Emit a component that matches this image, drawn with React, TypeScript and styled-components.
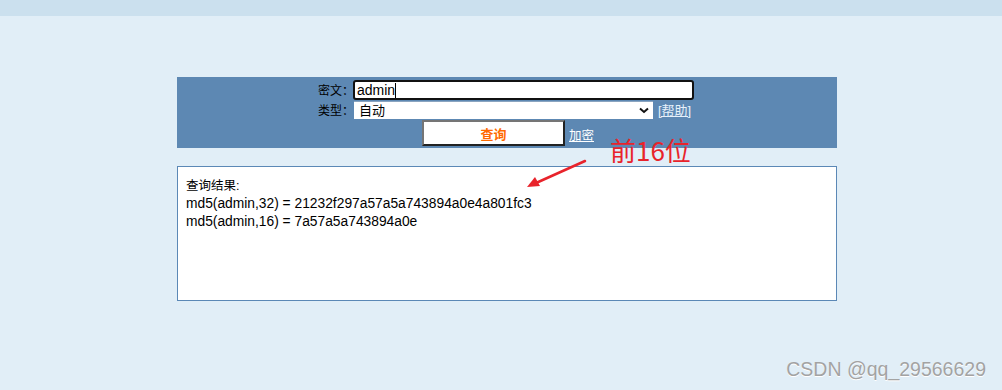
import React from 'react';
import styled, {createGlobalStyle} from 'styled-components';

const GlobalStyle = createGlobalStyle`
  html, body {
    margin: 0;
    padding: 0;
    background: #e1eef7;
    font-family: "Liberation Sans", "Noto Sans CJK SC", sans-serif;
  }
`;

const Page = styled.div`
  position: relative;
  width: 1002px;
  height: 390px;
  overflow: hidden;
`;
const TopBand = styled.div`
  height: 16px;
  background: #cbe0ee;
`;
const Main = styled.div`
  position: relative;
  width: 660px;
  margin: 61px 0 0 177px;
`;
const FormPanel = styled.div`
  height: 71px;
  box-sizing: border-box;
  background: #5d88b3;
  padding: 3px 0 0 141px;
  display: flex;
  flex-direction: column;
  align-items: flex-start;
  gap: 1px;
`;
const Row = styled.div`
  display: flex;
  align-items: center;
  height: ${({h}: {h: number}) => h}px;
  line-height: 1;
`;
const Label = styled.span`
  width: 35px;
  min-width: 0;
  flex-shrink: 0;
  font-family: "Noto Sans CJK SC", sans-serif;
  font-size: 12px;
  color: #000;
  white-space: nowrap;
`;
const FakeInput = styled.div`
  box-sizing: border-box;
  width: 341px;
  height: 20px;
  border: 2px solid #111;
  border-radius: 3px;
  background: #fff;
  padding-left: 2px;
  font-size: 14px;
  color: #000;
  display: flex;
  align-items: center;
`;
const Caret = styled.span`
  width: 1px;
  height: 15px;
  background: #000;
`;
const FakeSelect = styled.div`
  box-sizing: border-box;
  width: 299px;
  height: 18px;
  margin-left: 1px;
  background: #fff;
  border-top: 1px solid #8aa4bf;
  padding: 0 4px 0 5px;
  font-size: 13px;
  display: flex;
  align-items: center;
  justify-content: space-between;
`;
const HelpLink = styled.a`
  margin-left: 5px;
  font-size: 13px;
  color: #e6f0fa;
  text-decoration: underline;
  white-space: nowrap;
`;
const ButtonRow = styled.div`
  display: flex;
  align-items: center;
  margin-left: 104px;
`;
const QueryButton = styled.button`
  box-sizing: border-box;
  width: 143px;
  height: 26px;
  background: #fff;
  border-style: solid;
  border-width: 2px;
  border-color: #757575 #222 #222 #757575;
  font-family: "Liberation Sans", "Noto Sans CJK SC", sans-serif;
  font-size: 13px;
  font-weight: bold;
  color: #ff6a00;
  padding: 0;
`;
const EncryptLink = styled.a`
  margin-left: 4px;
  margin-top: 3px;
  font-size: 12.5px;
  color: #fff;
  text-decoration: underline;
`;
const ResultBox = styled.div`
  box-sizing: border-box;
  margin-top: 18px;
  height: 135px;
  background: #fff;
  border: 1px solid #5b88b6;
  padding: 10px 8px;
  line-height: 18px;
  color: #000;
`;
const ResultLine = styled.div`
  font-size: ${({size}: {size?: number}) => size ?? 13.8}px;
  white-space: nowrap;
`;
const Note = styled.div`
  position: absolute;
  left: 433px;
  top: 58px;
  font-family: "Noto Sans CJK SC", sans-serif;
  font-size: 26px;
  line-height: 30px;
  color: #e8232b;
`;
const Arrow = styled.svg`
  position: absolute;
  left: 345px;
  top: 80px;
`;
const Watermark = styled.div`
  position: absolute;
  right: 16px;
  bottom: 9px;
  font-family: "Liberation Sans", sans-serif;
  font-size: 19.5px;
  color: #a3a3a3;
  text-shadow: 0 1px 0 #fff;
`;

export default function App() {
  return (
    <>
      <GlobalStyle />
      <Page>
        <TopBand />
        <Main>
          <FormPanel>
            <Row h={20}>
              <Label>密文：</Label>
              <FakeInput>admin<Caret /></FakeInput>
            </Row>
            <Row h={18}>
              <Label>类型：</Label>
              <FakeSelect>
                <span>自动</span>
                <svg width="10" height="7" viewBox="0 0 10 7">
                  <path d="M1 1.5 L5 5 L9 1.5" fill="none" stroke="#111" strokeWidth="2" />
                </svg>
              </FakeSelect>
              <HelpLink>[帮助]</HelpLink>
            </Row>
            <ButtonRow>
              <QueryButton>查询</QueryButton>
              <EncryptLink>加密</EncryptLink>
            </ButtonRow>
          </FormPanel>
          <ResultBox>
            <ResultLine size={12.5}>查询结果:</ResultLine>
            <ResultLine>md5(admin,32) = 21232f297a57a5a743894a0e4a801fc3</ResultLine>
            <ResultLine>md5(admin,16) = 7a57a5a743894a0e</ResultLine>
          </ResultBox>
          <Note>前16位</Note>
          <Arrow width="70" height="35" viewBox="0 0 70 35">
            <path d="M63 4 L14 26" stroke="#e8232b" strokeWidth="2.5" strokeLinecap="round" />
            <path d="M5 30 L13 20 L18 29 Z" fill="#e8232b" />
          </Arrow>
        </Main>
        <Watermark>CSDN @qq_29566629</Watermark>
      </Page>
    </>
  );
}
